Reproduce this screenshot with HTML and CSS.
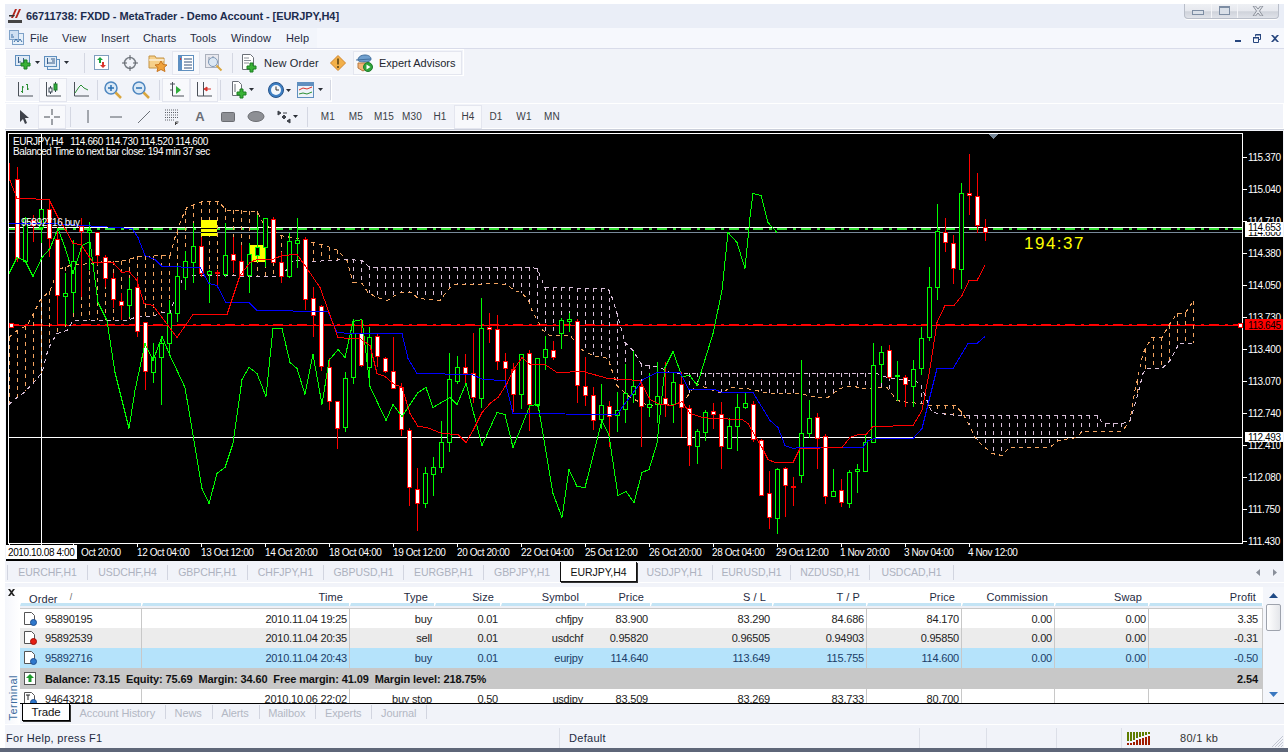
FILE: index.html
```html
<!DOCTYPE html>
<html lang="en">
<head>
<meta charset="utf-8">
<title>MetaTrader</title>
<link rel="stylesheet" href="styles.css">
</head>
<body>
<div class="window">
  <header class="titlebar">
    <svg class="logo" width="14" height="16" viewBox="0 0 14 16"><path d="M3 10 7 1h2L5 10zM7 10l4-9h2L9 10z" fill="#b3261e"/><path d="M1 7h6l-1 1.500H1z" fill="#333"/><rect x="0" y="12" width="14" height="3" fill="#444"/></svg>
    <span class="title-text">66711738: FXDD - MetaTrader - Demo Account - [EURJPY,H4]</span>
    <div class="winbtns">
      <span class="winbtn wb-min"><i></i></span>
      <span class="winbtn wb-max"><i></i></span>
      <span class="winbtn wb-close"><svg width="12" height="10" viewBox="0 0 12 10"><path d="M1 0h2.500L6 3l2.500-3H11L7.500 5 11 10H8.500L6 7l-2.500 3H1l3.500-5z" fill="#dfe2e8" stroke="#8c919b"/></svg></span>
    </div>
  </header>
  <nav class="menubar">
    <svg class="menu-icon" width="15" height="16" viewBox="0 0 15 16"><rect x="3.500" y="3.500" width="11" height="11" fill="#e6f0fa" stroke="#7ea2c8"/><rect x=".5" y=".5" width="9" height="9" fill="#cfe0f2" stroke="#7ea2c8"/><path d="M2 5h2M2 7h3M5 12l2-3 2 3 2-3 2 3" stroke="#3a6ea5" fill="none"/></svg>
    <span class="menu-item m1">File</span>
    <span class="menu-item m2">View</span>
    <span class="menu-item m3">Insert</span>
    <span class="menu-item m4">Charts</span>
    <span class="menu-item m5">Tools</span>
    <span class="menu-item m6">Window</span>
    <span class="menu-item m7">Help</span>
    <div class="mdi-btns">
      <svg class="mdi-min" width="7" height="3" viewBox="0 0 7 3"><rect width="6" height="2" y="1" fill="#27467e"/></svg>
      <svg width="8" height="9" viewBox="0 0 8 9"><path d="M2.500 2.500v-2h5v5h-2M.5 3.500h5v5h-5z" fill="none" stroke="#27467e"/><rect x="3" width="5" height="1.500" fill="#27467e"/><rect y="3" width="6" height="1.500" fill="#27467e"/></svg>
      <svg width="8" height="7" viewBox="0 0 8 7"><path d="M0 0h2l2 2 2-2h2L5 3.500 8 7H6L4 5 2 7H0l3-3.500z" fill="#27467e"/></svg>
    </div>
  </nav>

  <div class="toolbars">
    <div class="bar bar1">
      <span class="tool"><svg class="ico" width="18" height="18" viewBox="0 0 18 18"><rect x=".5" y="1.500" width="14" height="10" fill="#dfeaf6" stroke="#5f8fbf"/><path d="M3.500 3v6M3 8h3M8.500 4v5" stroke="#3a5f8a" fill="none"/><path d="M9 6h3v3h3v3h-3v3H9v-3H6V9h3z" fill="#39b236" stroke="#1d7f23"/><path class="caret" d="M20 7h5l-2.500 3z"/></svg></span>
      <span class="tool"><svg class="ico" width="18" height="18" viewBox="0 0 18 18"><rect x="4.500" y="5.500" width="12" height="10" fill="#e6eff8" stroke="#5f8fbf"/><rect x="1.500" y="2.500" width="12" height="10" fill="#dfeaf6" stroke="#5f8fbf"/><path d="M4.500 4v6M4 9h8M8 5h4M9 7h3" stroke="#3a5f8a" fill="none"/><path class="caret" d="M21 7h5l-2.500 3z"/></svg></span>
      <span class="sep s18"></span>
      <span class="tool"><svg class="ico" width="18" height="18" viewBox="0 0 18 18"><rect x="1.500" y="1.500" width="14" height="14" fill="#fff" stroke="#7f9dbe"/><path d="M7 3l3 3H8v3H6V6H4z" fill="#19a23b"/><path d="M10 14l3-3h-2V8H9v3H7z" fill="#d8342c"/></svg></span>
      <span class="tool"><svg class="ico" width="18" height="18" viewBox="0 0 18 18"><circle cx="9" cy="9" r="5.500" fill="none" stroke="#7b8088" stroke-width="1.500"/><path d="M9 1v5M9 12v5M1 9h5M12 9h5" stroke="#5d6168"/></svg></span>
      <span class="tool"><svg class="ico" width="20" height="18" viewBox="0 0 20 18"><path d="M1 2h6l1 2h8v10H1z" fill="#f6d08a" stroke="#c49345"/><path d="M1 6h15" stroke="#fff"/><path d="M13 7l2 3.500 4 .5-3 2.500 1 4-4-2-4 2 1-4-3-2.500 4-.5z" fill="#f0a33c" stroke="#c9761f"/></svg></span>
      <span class="tool on"><svg class="ico" width="16" height="16" viewBox="0 0 16 16"><rect x=".5" y=".5" width="15" height="15" fill="#fff" stroke="#5f8fbf"/><rect x="1" y="1" width="3" height="14" fill="#5b90c6"/><path d="M6 4h8M6 7h8M6 10h8M6 13h8" stroke="#33507a"/><path d="M2.500 3v2" stroke="#d8342c"/></svg></span>
      <span class="tool"><svg class="ico" width="20" height="20" viewBox="0 0 20 20"><rect x="1.500" y="1.500" width="13" height="13" fill="#e8e8ee" stroke="#aab0bc"/><path d="M5 4v6M9 3v7" stroke="#8a96a8"/><circle cx="9" cy="9" r="4.500" fill="#dbe7f3" stroke="#7f98b6"/><path d="M12.500 12.500l5 5" stroke="#d9a63e" stroke-width="2"/></svg></span>
      <span class="sep s4"></span>
      <span class="order-btn"><svg width="18" height="20" viewBox="0 0 18 20"><path d="M1.500 1.500h8l3 3v12h-11z" fill="#fff" stroke="#6b7078"/><path d="M3 5h5M3 7.500h7M3 10h5" stroke="#8a8f98"/><path d="M9 10h3v3h3v3h-3v3H9v-3H6v-3h3z" fill="#39b236" stroke="#1d7f23"/></svg><span class="tb-label">New Order</span></span>
      <span class="tool warn"><svg class="ico" width="16" height="16" viewBox="0 0 16 16"><path d="M8 .5 15.500 8 8 15.500.5 8z" fill="#f2b04a" stroke="#d4862a"/><rect x="7" y="3.500" width="2" height="6" fill="#7b5a1e"/><rect x="7" y="11" width="2" height="2" fill="#7b5a1e"/></svg></span>
      <span class="ea-btn"><svg width="18" height="20" viewBox="0 0 18 20"><path d="M3 7c0-3 3-5 7-5s6 2 6 4-3 3-7 3-6-1-6-2z" fill="#6f9fce" stroke="#44709e"/><path d="M1 7l15-1" stroke="#44709e"/><path d="M3 10h10v5l-5 3-5-3z" fill="#f3b477" stroke="#b77a42"/><circle cx="13" cy="14" r="4.500" fill="#2ea53a" stroke="#1f7a2a"/><path d="M11.500 11.500l4 2.500-4 2.500z" fill="#fff"/></svg><span class="tb-label">Expert Advisors</span></span>
    </div>
    <div class="bar bar2">
      <span class="tool"><svg class="ico" width="18" height="18" viewBox="0 0 18 18"><path class="axis" d="M2.500 1v14H17"/><path d="M6.500 5v7M5 10.500h1.500M6.500 6H8M11.500 3v6M10 3.500h1.500M11.500 8H13" stroke="#2b8f34" fill="none"/></svg></span>
      <span class="tool on"><svg class="ico" width="18" height="18" viewBox="0 0 18 18"><path class="axis" d="M2.500 1v14H17"/><path d="M6.500 5v8M11.500 1v10" stroke="#35424f"/><rect x="5" y="7" width="3" height="4" fill="#fff" stroke="#35424f"/><rect x="10" y="3" width="3" height="6" fill="#2fae3a" stroke="#1f7a2a"/></svg></span>
      <span class="tool"><svg class="ico" width="18" height="18" viewBox="0 0 18 18"><path class="axis" d="M2.500 1v14H17"/><path d="M3 12 7 6l2-2 3 3 4 2" fill="none" stroke="#2b8f34"/></svg></span>
      <span class="sep sa"></span>
      <span class="tool"><svg class="ico" width="20" height="20" viewBox="0 0 20 20"><circle cx="8" cy="8" r="6" fill="#dbe9f6" stroke="#4d86bf" stroke-width="1.500"/><path d="M5 8h6M8 5v6" stroke="#2a6fb2" stroke-width="1.500"/><path d="M12.500 12.500l5.500 5.500" stroke="#d9a63e" stroke-width="2.500"/></svg></span>
      <span class="tool"><svg class="ico" width="20" height="20" viewBox="0 0 20 20"><circle cx="8" cy="8" r="6" fill="#dbe9f6" stroke="#4d86bf" stroke-width="1.500"/><path d="M5 8h6" stroke="#2a6fb2" stroke-width="1.500"/><path d="M12.500 12.500l5.500 5.500" stroke="#d9a63e" stroke-width="2.500"/></svg></span>
      <span class="sep sb"></span>
      <span class="tool on"><svg class="ico" width="18" height="18" viewBox="0 0 18 18"><path class="axis" d="M5.500 1v14H17M3 3h5M3 9h2"/><path d="M9 5l5 4-5 4z" fill="#2fae3a"/></svg></span>
      <span class="tool on"><svg class="ico" width="18" height="18" viewBox="0 0 18 18"><path class="axis" d="M2.500 1v14H17M8.500 1v14"/><path d="M16 8h-4M12 6l-3 2 3 2z" fill="#d8342c" stroke="#d8342c"/></svg></span>
      <span class="sep sc"></span>
      <span class="tool"><svg class="ico" width="18" height="20" viewBox="0 0 18 20"><path d="M1.500 1.500h6l3 3v11h-9z" fill="#fff" stroke="#6b7078"/><path d="M4 4v8" stroke="#6b7078"/><path d="M9 9h3v3h3v3h-3v3H9v-3H6v-3h3z" fill="#39b236" stroke="#1d7f23"/><path class="caret" d="M18 8h5l-2.500 3z"/></svg></span>
      <span class="tool t-clock"><svg class="ico" width="18" height="18" viewBox="0 0 18 18"><circle cx="9" cy="9" r="7.500" fill="#3f80c4" stroke="#27548a"/><circle cx="9" cy="9" r="5" fill="#f5f8fc"/><path d="M9 5.500V9h3" stroke="#333" fill="none"/><path class="caret" d="M19 8h5l-2.500 3z"/></svg></span>
      <span class="tool t-ind"><svg class="ico" width="18" height="16" viewBox="0 0 18 16"><rect x=".5" y=".5" width="16" height="15" fill="#eef3f9" stroke="#5f8fbf"/><rect x="1" y="1" width="15" height="3" fill="#5f8fbf"/><path d="M2 8l4-2 4 1 5-2" stroke="#d8342c" fill="none"/><path d="M2 12l4-1 4 1 5-2" stroke="#2b8f34" fill="none"/><path class="caret" d="M21 6h5l-2.500 3z"/></svg></span>
      <span class="sep send"></span>
    </div>
    <div class="bar bar3">
      <span class="tool"><svg class="ico" width="12" height="18" viewBox="0 0 12 18"><path d="M2 2v12l3-3 2 5 2-1-2-5h4z" fill="#3e424a"/></svg></span>
      <span class="tool on"><svg class="ico" width="18" height="18" viewBox="0 0 18 18"><path d="M9 1v6M9 11v6M1 9h6M11 9h6" stroke="#454a52"/></svg></span>
      <span class="sep sd"></span>
      <span class="tool"><svg class="ico" width="4" height="16" viewBox="0 0 4 16"><path d="M2 1v13" stroke="#555a63"/></svg></span>
      <span class="tool"><svg class="ico" width="16" height="4" viewBox="0 0 16 4"><path d="M2 2h12" stroke="#555a63"/></svg></span>
      <span class="tool"><svg class="ico" width="16" height="16" viewBox="0 0 16 16"><path d="M2 14 14 2" stroke="#6b7078"/></svg></span>
      <span class="tool"><svg class="ico" width="16" height="16" viewBox="0 0 16 16"><path d="M1 1h13M1 3.500h13M1 6h13M1 8.500h13M1 11h9" stroke="#5c6068" stroke-dasharray="1 1" fill="none"/><path d="M11.500 16v-3h3M11.500 14.500h2" stroke="#444" fill="none"/></svg></span>
      <span class="tool glyph">A</span>
      <span class="tool"><svg class="ico" width="14" height="10" viewBox="0 0 14 10"><rect x=".5" y=".5" width="13" height="9" rx="1" fill="#8d8f94" stroke="#6b6d72"/></svg></span>
      <span class="tool"><svg class="ico" width="18" height="11" viewBox="0 0 18 11"><ellipse cx="9" cy="5.500" rx="8" ry="5" fill="#8d8f94" stroke="#6b6d72"/></svg></span>
      <span class="tool"><svg class="ico" width="16" height="14" viewBox="0 0 16 14"><path d="M2 1l3 2-3 2zM7 3h4M14 9l-3 2 3 2zM6 7l2-2 2 2-2 2z" fill="#3e424a" stroke="#3e424a"/><path class="caret" d="M17 5h5l-2.500 3z"/></svg></span>
      <span class="sep s3"></span>
      <span class="tool tf">M1</span><span class="tool tf">M5</span><span class="tool tf">M15</span><span class="tool tf">M30</span><span class="tool tf">H1</span><span class="tool tf on">H4</span><span class="tool tf">D1</span><span class="tool tf">W1</span><span class="tool tf">MN</span>
    </div>
  </div>

  <div class="chart-wrap">
    <svg id="chart" class="chart" width="1277" height="430" viewBox="6 131 1277 430">
      <g id="hlines">
        <path class="hl-red" d="M9 325.500H1242"/>
        <path class="hl-red-dash" d="M9 325H1242"/>
        <path class="hl-green" d="M9 229H1242"/>
        <path class="hl-white" d="M9 227.500H1242"/>
        <path class="hl-gray" d="M9 232.500H1242"/>
        <path class="hl-white" d="M9 437.500H1242"/>
        <path class="hl-white" d="M41.500 134V543"/>
      </g>
      <g id="cloud"></g>
      <rect class="yellow" x="201" y="220" width="16" height="16"/>
      <rect class="yellow" x="250" y="245" width="16" height="17"/>
      <g id="candles"></g>
      <g id="indicators"></g>
      <path class="stripe" d="M201 228.500H217M201 232.500H217"/>
      <rect class="frame" x="8.500" y="133.500" width="1234" height="410"/>
      <path class="ticks" d="M1243 157.500h4M1243 189.500h4M1243 221.500h4M1243 253.500h4M1243 285.500h4M1243 317.500h4M1243 349.500h4M1243 381.500h4M1243 413.500h4M1243 445.500h4M1243 477.500h4M1243 509.500h4M1243 541.500h4M9.500 544v3M41.500 544v3M73.500 544v3M137.500 544v3M201.500 544v3M265.500 544v3M329.500 544v3M393.500 544v3M457.500 544v3M521.500 544v3M585.500 544v3M649.500 544v3M713.500 544v3M777.500 544v3M841.500 544v3M905.500 544v3M969.500 544v3"/>
      <path class="triangle" d="M989 134h9l-4.500 5z"/>
      <rect class="mark" x="9.500" y="323.500" width="4" height="4"/>
      <rect class="mark" x="1238.500" y="323.500" width="4" height="4"/>

      <text class="t" x="13" y="145">EURJPY,H4   114.660 114.730 114.520 114.600</text>
      <text class="t" x="13" y="155">Balanced Time to next bar close: 194 min 37 sec</text>
      <text class="t" x="21" y="226">95892716 buy</text>
      <text class="timer" x="1024" y="249">194:37</text>

      <text class="t" x="1248" y="161">115.370</text>
      <text class="t" x="1248" y="193">115.040</text>
      <text class="t" x="1248" y="225">114.710</text>
      <text class="t" x="1248" y="257">114.380</text>
      <text class="t" x="1248" y="289">114.050</text>
      <text class="t" x="1248" y="321">113.730</text>
      <text class="t" x="1248" y="353">113.400</text>
      <text class="t" x="1248" y="385">113.070</text>
      <text class="t" x="1248" y="417">112.740</text>
      <text class="t" x="1248" y="449">112.410</text>
      <text class="t" x="1248" y="481">112.080</text>
      <text class="t" x="1248" y="513">111.750</text>
      <text class="t" x="1248" y="545">111.430</text>

      <rect class="tag-white" x="1245" y="227" width="38" height="10"/>
      <text class="t dark" x="1248" y="236">114.600</text>
      <rect class="tag-white" x="1245" y="222" width="38" height="10"/>
      <text class="t dark" x="1248" y="231">114.653</text>
      <rect class="tag-red" x="1245" y="319" width="38" height="11"/>
      <text class="t dark" x="1248" y="329">113.645</text>
      <rect class="tag-white" x="1245" y="432" width="38" height="10"/>
      <text class="t dark" x="1248" y="441">112.493</text>

      <rect class="tag-white" x="6" y="545" width="71" height="14"/>
      <text class="t dark" x="8" y="556">2010.10.08 4:00</text>
      <text class="t" x="81" y="556">Oct 20:00</text>
      <text class="t" x="137" y="556">12 Oct 04:00</text>
      <text class="t" x="201" y="556">13 Oct 12:00</text>
      <text class="t" x="265" y="556">14 Oct 20:00</text>
      <text class="t" x="329" y="556">18 Oct 04:00</text>
      <text class="t" x="393" y="556">19 Oct 12:00</text>
      <text class="t" x="457" y="556">20 Oct 20:00</text>
      <text class="t" x="521" y="556">22 Oct 04:00</text>
      <text class="t" x="585" y="556">25 Oct 12:00</text>
      <text class="t" x="649" y="556">26 Oct 20:00</text>
      <text class="t" x="712" y="556">28 Oct 04:00</text>
      <text class="t" x="776" y="556">29 Oct 12:00</text>
      <text class="t" x="840" y="556">1 Nov 20:00</text>
      <text class="t" x="904" y="556">3 Nov 04:00</text>
      <text class="t" x="968" y="556">4 Nov 12:00</text>
    </svg>
  </div>

  <div class="symtabs">
    <span class="symtab">EURCHF,H1</span>
    <span class="symtab">USDCHF,H4</span>
    <span class="symtab">GBPCHF,H1</span>
    <span class="symtab">CHFJPY,H1</span>
    <span class="symtab">GBPUSD,H1</span>
    <span class="symtab">EURGBP,H1</span>
    <span class="symtab">GBPJPY,H1</span>
    <span class="symtab active">EURJPY,H4</span>
    <span class="symtab">USDJPY,H1</span>
    <span class="symtab">EURUSD,H1</span>
    <span class="symtab">NZDUSD,H1</span>
    <span class="symtab">USDCAD,H1</span>
    <span class="tab-arrows">
      <svg width="4" height="7" viewBox="0 0 4 7"><path d="M4 0v7L0 3.500z" fill="#8a8f9a"/></svg>
      <svg width="4" height="7" viewBox="0 0 4 7"><path d="M0 0v7l4-3.500z" fill="#8a8f9a"/></svg>
    </span>
  </div>

  <section class="terminal">
    <aside class="side">
      <svg class="side-x" width="7" height="7" viewBox="0 0 7 7"><path d="M0 0h2l1.500 2L5 0h2L4.500 3.500 7 7H5L3.500 5 2 7H0l2.500-3.500z" fill="#222"/></svg>
      <span class="side-label">Terminal</span>
    </aside>
    <div class="term-main">
      <div class="term-top">
        <div class="table">
          <div class="cols head">
            <span class="cell left">Order<em>/</em></span>
            <span class="cell">Time</span><span class="cell">Type</span><span class="cell">Size</span><span class="cell">Symbol</span><span class="cell">Price</span><span class="cell">S / L</span><span class="cell">T / P</span><span class="cell">Price</span><span class="cell">Commission</span><span class="cell">Swap</span><span class="cell">Profit</span>
          </div>
          <div class="headgap"></div>
          <div class="cols row r1">
            <span class="cell first"><svg class="doc" width="13" height="14" viewBox="0 0 13 14"><path d="M.5.5h7l3 3v9H.5z" fill="#fff" stroke="#555"/><circle cx="9.500" cy="10.500" r="3" fill="#2f78cc" stroke="#1f4f90"/></svg>95890195</span>
            <span class="cell">2010.11.04 19:25</span><span class="cell">buy</span><span class="cell">0.01</span><span class="cell">chfjpy</span><span class="cell">83.900</span><span class="cell">83.290</span><span class="cell">84.686</span><span class="cell">84.170</span><span class="cell">0.00</span><span class="cell">0.00</span><span class="cell">3.35</span>
          </div>
          <div class="cols row alt">
            <span class="cell first"><svg class="doc" width="13" height="14" viewBox="0 0 13 14"><path d="M.5.5h7l3 3v9H.5z" fill="#fff" stroke="#555"/><circle cx="9.500" cy="10.500" r="3" fill="#e51e12" stroke="#a01208"/></svg>95892539</span>
            <span class="cell">2010.11.04 20:35</span><span class="cell">sell</span><span class="cell">0.01</span><span class="cell">usdchf</span><span class="cell">0.95820</span><span class="cell">0.96505</span><span class="cell">0.94903</span><span class="cell">0.95850</span><span class="cell">0.00</span><span class="cell">0.00</span><span class="cell">-0.31</span>
          </div>
          <div class="cols row sel">
            <span class="cell first"><svg class="doc" width="13" height="14" viewBox="0 0 13 14"><path d="M.5.5h7l3 3v9H.5z" fill="#fff" stroke="#555"/><circle cx="9.500" cy="10.500" r="3" fill="#2f78cc" stroke="#1f4f90"/></svg>95892716</span>
            <span class="cell">2010.11.04 20:43</span><span class="cell">buy</span><span class="cell">0.01</span><span class="cell">eurjpy</span><span class="cell">114.640</span><span class="cell">113.649</span><span class="cell">115.755</span><span class="cell">114.600</span><span class="cell">0.00</span><span class="cell">0.00</span><span class="cell">-0.50</span>
          </div>
          <div class="balance">
            <svg class="doc" width="13" height="14" viewBox="0 0 13 14"><rect x=".5" y=".5" width="11" height="12" fill="#fff" stroke="#555"/><path d="M6 2l4 4H7.500v4h-3V6H2z" fill="#1d9a2c"/></svg>
            <b>Balance: 73.15&nbsp; Equity: 75.69&nbsp; Margin: 34.60&nbsp; Free margin: 41.09&nbsp; Margin level: 218.75%</b>
            <b class="total">2.54</b>
          </div>
          <div class="cols row">
            <span class="cell first"><svg class="doc" width="13" height="14" viewBox="0 0 13 14"><path d="M.5.5h7l3 3v9H.5z" fill="#fff" stroke="#555"/><path d="M2 3h4M4 3v5" stroke="#222"/><circle cx="9.500" cy="10.500" r="3" fill="#2f78cc" stroke="#1f4f90"/></svg>94643218</span>
            <span class="cell">2010.10.06 22:02</span><span class="cell">buy stop</span><span class="cell">0.50</span><span class="cell">usdjpy</span><span class="cell">83.509</span><span class="cell">83.269</span><span class="cell">83.733</span><span class="cell">80.700</span><span class="cell"></span><span class="cell"></span><span class="cell"></span>
          </div>
        </div>
        <div class="scroll">
          <svg width="9" height="5" viewBox="0 0 9 5"><path d="M4.500 0 9 5H0z" fill="#1f4a86"/></svg>
          <span class="thumb"></span>
          <svg class="sc-down" width="9" height="5" viewBox="0 0 9 5"><path d="M0 0h9L4.500 5z" fill="#3a78c0"/></svg>
        </div>
      </div>
      <div class="termtabs">
        <span class="termtab active">Trade</span>
        <span class="termtab">Account History</span>
        <span class="termtab">News</span>
        <span class="termtab">Alerts</span>
        <span class="termtab">Mailbox</span>
        <span class="termtab">Experts</span>
        <span class="termtab">Journal</span>
      </div>
    </div>
  </section>

  <footer class="statusbar">
    <span class="st st-help">For Help, press F1</span>
    <span class="st st-def">Default</span>
    <span class="st st-a"></span>
    <span class="st st-b"></span>
    <span class="st st-c"></span>
    <span class="st st-meter">
      <svg width="24" height="13" viewBox="0 0 24 13"><path d="M1 0v9M4 0v9M7 0v8M10 0v6M13 0v5M16 0v4M19 0v3M22 0v2" stroke="#5e7c00" stroke-width="2"/><path d="M1 11v2M4 11v2M7 10v3M10 8v5M13 7v6M16 6v7M19 5v8M22 4v9" stroke="#a21c00" stroke-width="2"/></svg>
    </span>
    <span class="st-kb">80/1 kb</span>
    <svg class="grip" width="14" height="14" viewBox="0 0 14 14"><path d="M13 2 2 13M13 5 5 13M13 8l-5 5M13 11l-2 2" stroke="#c3c7d2"/></svg>
  </footer>
</div>
<script src="chart.js"></script>
</body>
</html>
```
FILE: styles.css
```css
html, body { margin: 0; padding: 0; background: #fff; }
body { width: 1288px; height: 752px; overflow: hidden; font-family: "Liberation Sans", Arial, sans-serif; font-size: 11px; color: #1f2b42; }
.window { margin: 4px 4px 0 5px; height: 748px; display: flex; flex-direction: column; background: #f1f3f9; position: relative; }

.titlebar { height: 24px; flex: none; display: flex; align-items: center; padding-left: 3px; background: #eaeef7; }
.logo { margin-right: 4px; }
.title-text { font-weight: bold; font-size: 11px; letter-spacing: -.08px; color: #1c2c4e; }
.winbtns { margin-left: auto; margin-right: 5px; margin-top: -10px; height: 14px; display: flex; border: 1px solid #b9bec9; border-top: 0; border-radius: 0 0 4px 4px; background: linear-gradient(#eef0f4 0, #e6e8ee 50%, #cfd3db 55%, #dfe2e9 100%); box-shadow: 0 1px 0 #fff; }
.winbtn { display: flex; align-items: center; justify-content: center; border-right: 1px solid #f4f5f8; height: 14px; }
.wb-min { width: 26px; }
.wb-max { width: 25px; }
.wb-close { width: 40px; border-right: 0; }
.winbtn i { display: block; border: 1px solid #7d8da3; background: #d9dfe8; }
.wb-min i { width: 10px; height: 3px; margin-top: 3px; }
.wb-max i { width: 9px; height: 6px; border-top-width: 2px; }

.menubar { height: 20px; flex: none; display: flex; align-items: center; padding-left: 4px; background: linear-gradient(90deg, #f2f5fb 0, #f2f5fb 312px, #f6f8fd 312px); border-bottom: 1px solid #d9dcea; }
.menu-icon { margin-right: 6px; }
.menu-item { font-size: 11px; letter-spacing: .15px; color: #1f2b42; }
.m1 { width: 32px; }
.m2 { width: 39px; }
.m3 { width: 42px; }
.m4 { width: 47px; }
.m5 { width: 41px; }
.m6 { width: 55px; }
.mdi-btns { margin-left: auto; margin-right: 5px; display: flex; gap: 10px; align-items: center; }
.mdi-min { margin-top: 4px; margin-right: 1px; }

.toolbars { flex: none; height: 81px; display: flex; flex-direction: column; gap: 1px; box-sizing: border-box; border-bottom: 1px solid #cbcfdb; }
.bar { display: flex; align-items: center; box-sizing: border-box; border: 1px solid #fff; background: #f1f3f9; }
.bar1 { height: 27px; width: 459px; padding-left: 4px; }
.bar2 { height: 25px; width: 327px; padding-left: 5px; }
.bar3 { height: 26px; width: 1279px; padding: 1px 0 0 4px; }
.tool { width: 28px; height: 24px; flex: none; display: flex; align-items: center; justify-content: center; box-sizing: border-box; }
.tool.on { background: #f8f9fc; outline: 1px solid #e4e6ef; outline-offset: -1px; }
.ico { overflow: visible; }
.caret { fill: #2a2e36; }
.axis { fill: none; stroke: #4b5159; }
.sep { flex: none; width: 1px; height: 20px; background: #d4d7e2; }
.s18 { margin: 0 3px 0 18px; }
.s4 { margin: 0 4px; }
.sa { margin: 0 1px 0 2px; }
.sb { margin: 0 2px 0 4px; }
.sc { margin: 0 5px 0 2px; }
.sd { margin: 0 3px 0 4px; }
.s3 { margin: 0 6px 0 9px; }
.send { margin-left: 10px; }
.bar2 .t-clock { margin-left: 8px; }
.bar2 .t-ind { margin-left: 2px; }
.order-btn { flex: none; display: flex; align-items: center; gap: 5px; width: 90px; padding-left: 4px; box-sizing: border-box; }
.tb-label { letter-spacing: .2px; color: #22262e; white-space: nowrap; }
.warn { width: 24px; margin-right: 3px; margin-left: -1px; }
.ea-btn { flex: none; display: flex; align-items: center; gap: 6px; height: 22px; width: 107px; margin-left: 1px; box-sizing: border-box; padding-left: 1px; background: #f8f9fc; outline: 1px solid #e4e6ef; }
.ea-btn .tb-label { letter-spacing: 0; }
.glyph { font-size: 13px; font-weight: bold; color: #6a6e76; }
.tf { font-size: 10px; letter-spacing: .2px; color: #3a3e46; }

.chart-wrap { flex: none; height: 430px; margin: 1px 0 0 1px; background: #000; width: 1277px; }
.chart { display: block; background: #000; shape-rendering: crispEdges; }
.chart text { font-family: "Liberation Sans", Arial, sans-serif; font-size: 10px; letter-spacing: -.4px; white-space: pre; }
.t { fill: #fff; }
.t.dark { fill: #000; }
.chart .timer { fill: #ffff00; font-size: 17px; letter-spacing: 1.5px; }
.hl-white { stroke: #fff; fill: none; }
.hl-gray { stroke: #778899; fill: none; }
.hl-green { stroke: #32e032; stroke-width: 2; stroke-dasharray: 10 6 3 5; fill: none; }
.hl-red { stroke: #ff0000; fill: none; }
.hl-red-dash { stroke: #ff0000; stroke-width: 2; stroke-dasharray: 10 6 3 5; fill: none; }
.yellow { fill: #ffff00; }
.stripe { stroke: #000; fill: none; }
.frame { fill: none; stroke: #fff; }
.ticks { stroke: #fff; fill: none; }
.triangle { fill: #778899; }
.mark { fill: #fff; stroke: #f00; }
.tag-white { fill: #fff; }
.tag-red { fill: #f00; }
.wick-g { stroke: #00ff00; fill: none; }
.wick-r { stroke: #ff0000; fill: none; }
.body-g { stroke: #00ff00; fill: #000; }
.body-r { stroke: #ff0000; fill: #fff; }
.line-red { stroke: #ff0000; fill: none; }
.line-blue { stroke: #0000ff; fill: none; }
.line-green { stroke: #00ff00; fill: none; }
.kumo-a, .hatch-a { stroke: #f4a460; fill: none; stroke-dasharray: 4 4; }
.kumo-b, .hatch-b { stroke: #d8bfd8; fill: none; stroke-dasharray: 4 4; }

.symtabs { flex: none; height: 21px; margin-top: 1px; display: flex; align-items: center; padding-left: 2px; background: #f1f3f9; border-bottom: 1px solid #fff; box-sizing: border-box; }
.symtab { flex: none; width: 80px; box-sizing: border-box; text-align: center; color: #adb2bf; letter-spacing: -.05px; font-size: 10.500px; line-height: 15px; border-right: 1px solid #d2d5e0; }
.symtab:first-child { border-left: 1px solid #d2d5e0; width: 81px; }
.symtab.active { width: 77px; height: 20px; line-height: 20px; background: #fff; color: #111; border: 1px solid #111; border-top: 0; box-shadow: 1px 1px 0 #333; position: relative; margin-left: -1px; }
.symtab:nth-child(9) { width: 76px; }
.symtab:nth-child(10) { width: 78px; }
.symtab:nth-child(11) { width: 79px; }
.symtab:nth-child(12) { width: 84px; }
.symtab:nth-child(4) { width: 76px; }
.symtab:nth-child(7) { width: 77px; }
.tab-arrows { margin-left: auto; margin-right: 7px; display: flex; gap: 13px; }

.terminal { flex: none; height: 141px; display: flex; padding-top: 4px; box-sizing: border-box; }
.side { flex: none; width: 15px; display: flex; flex-direction: column; align-items: center; background: linear-gradient(90deg, #f4f6fb, #fff); justify-content: space-between; }
.side-x { margin-top: 2px; margin-right: 2px; }
.side-label { writing-mode: vertical-rl; transform: rotate(180deg); color: #3b6c9e; letter-spacing: .5px; margin-bottom: 3px; }
.term-main { flex: 1; min-width: 0; display: flex; flex-direction: column; }
.term-top { flex: none; height: 116px; display: flex; border-bottom: 1px solid #000; overflow: hidden; }
.table { width: 1243px; flex: none; background: #fff; overflow: hidden; }
.cols { display: grid; grid-template-columns: 122px 208px 85px 66px 85px 65px 122px 94px 95px 93px 94px 114px; }
.head { height: 19px; background: #fff; }
.head .cell { border-bottom: 3px solid #c3e4f5; border-left: 1px solid #fff; margin-right: 1px; padding-right: 6px; height: 16px; line-height: 20px; letter-spacing: .1px; }
.head .left { text-align: left; padding-left: 8px; }
.head em { font-style: normal; font-size: 9px; margin-left: 12px; color: #666; vertical-align: 3px; }
.headgap { height: 3px; background: #eef0f6; border-bottom: 1px solid #c8c8c8; box-sizing: border-box; }
.cell { text-align: right; white-space: nowrap; overflow: hidden; }
.row { height: 20px; background: #fff; }
.row.r1 { height: 19px; }
.row .cell { line-height: 20px; padding-right: 2px; border-right: 1px solid transparent; letter-spacing: -.2px; color: #222; }
.row .cell:last-child { padding-right: 4px; }
.row .first, .row .cell:nth-child(2), .row .cell:nth-child(n+8) { border-right-color: #c8c8c8; }
.row.alt { background: #ececec; }
.row.sel { background: #b5e3fb; }
.row.sel .cell { color: #1a3d68; }
.row .cell.first { display: flex; align-items: center; text-align: left; padding-left: 4px; box-sizing: border-box; }
.doc { flex: none; margin-right: 8px; }
.balance { height: 21px; display: flex; align-items: center; background: #c8c8c8; padding: 0 5px 0 4px; color: #111; }
.balance b { letter-spacing: -.1px; }
.balance .total { margin-left: auto; }
.scroll { flex: 1; display: flex; flex-direction: column; align-items: center; padding-top: 6px; background: #f4f6fb; }
.thumb { display: block; width: 13px; height: 25px; margin-top: 6px; border: 1px solid #9ea3ad; border-radius: 2px; background: linear-gradient(90deg, #fff, #e4e6ea); }
.sc-down { margin-top: auto; margin-bottom: 6px; }

.termtabs { flex: none; display: flex; align-items: flex-start; padding-left: 2px; height: 19px; }
.termtab { color: #b3b8c4; padding: 0 10px 0 8.500px; height: 14px; line-height: 16px; margin-top: 1px; border-right: 1px solid #d2d5e0; letter-spacing: -.1px; }
.termtab.active { height: 17px; line-height: 17px; margin-top: 0; width: 48px; padding: 0; text-align: center; background: #fff; color: #111; border: 1px solid #000; border-top: 0; box-shadow: 1px 1px 0 #333; box-sizing: border-box; font-size: 11.500px; margin-right: 1px; }

.statusbar { flex: none; height: 24px; display: flex; align-items: center; padding-top: 3px; border-top: 1px solid #fff; box-sizing: border-box; background: #f1f3f9; }
.st { height: 20px; line-height: 20px; border-right: 1px solid #dcdfe8; box-sizing: border-box; letter-spacing: .3px; flex: none; }
.st-help { width: 555px; padding-left: 1px; }
.st-def { width: 360px; padding-left: 9px; }
.st-a { width: 67px; }
.st-b { width: 70px; }
.st-c { width: 65px; }
.st-meter { width: 58px; border-right: 0; padding-left: 5px; display: flex; align-items: center; }
.st-kb { letter-spacing: .3px; color: #333; }
.grip { margin-left: auto; align-self: flex-end; }
body::after { content: ""; position: absolute; left: 0; top: 748px; width: 1288px; height: 4px; background: #5e6678; }
```
FILE: chart.js
```js
(function () {
  var NS = 'http://www.w3.org/2000/svg';
  function el(parent, name, cls, attrs) {
    var n = document.createElementNS(NS, name);
    n.setAttribute('class', cls);
    for (var k in attrs) n.setAttribute(k, attrs[k]);
    parent.appendChild(n);
    return n;
  }
  // [colour, high, bodyTop, bodyBottom, low] in chart pixels; bars stand 8px apart from x = 17
  var C = [
    'r',167,179,258,262, 'g',217,218,261,263, 'r',215,220,225,242, 'g',209,209,227,243,
    'r',201,209,238,257, 'r',227,239,295,325, 'g',273,293,296,325, 'g',240,261,292,313,
    'r',218,226,231,297, 'g',222,230,232,270, 'r',232,232,255,265, 'r',255,257,278,287,
    'r',273,278,299,308, 'r',293,301,305,320, 'g',278,289,305,317, 'r',277,287,331,337,
    'r',322,322,371,390, 'g',343,357,372,383, 'g',337,343,357,405, 'g',300,313,343,353,
    'g',265,276,313,322, 'g',251,261,277,290, 'g',223,246,262,283, 'r',237,246,273,277,
    'g',270,271,274,303, 'r',270,272,273,285, 'g',223,255,274,277, 'r',237,254,260,273,
    'r',245,261,275,275, 'g',243,254,275,293, 'g',215,247,255,262, 'g',218,218,247,267,
    'r',217,219,262,263, 'r',252,262,276,283, 'g',233,241,276,278, 'g',218,240,243,268,
    'r',237,239,299,310, 'r',287,298,315,337, 'r',305,306,366,371, 'r',358,367,401,410,
    'r',401,401,428,449, 'g',372,378,427,432, 'g',319,333,377,384, 'r',319,333,365,367,
    'g',327,337,367,382, 'r',333,336,356,367, 'r',357,358,371,373, 'r',337,371,388,388,
    'r',383,387,429,436, 'r',428,430,487,506, 'r',468,489,503,531, 'g',467,473,503,508,
    'g',457,467,474,496, 'g',421,442,467,473, 'g',353,379,442,452, 'g',356,367,381,384,
    'r',354,367,373,383, 'r',333,373,397,403, 'g',298,328,398,408, 'r',313,327,329,343,
    'r',315,329,361,370, 'r',353,361,368,380, 'r',363,369,394,412, 'g',354,354,394,409,
    'r',350,353,404,431, 'g',358,358,405,407, 'g',336,349,357,370, 'r',341,350,357,360,
    'g',318,320,333,349, 'g',313,319,321,332, 'r',319,321,385,403, 'r',357,386,395,406,
    'r',387,395,420,430, 'g',384,405,419,429, 'r',401,406,416,447, 'g',392,410,415,432,
    'g',364,393,409,423, 'g',351,386,394,403, 'r',384,386,406,447, 'g',373,404,407,417,
    'g',362,396,404,423, 'r',362,398,404,417, 'g',372,382,404,423, 'r',372,384,407,437,
    'r',405,408,445,466, 'g',429,431,446,464, 'g',410,412,432,441, 'r',403,411,414,429,
    'r',402,414,446,469, 'g',418,426,448,449, 'g',394,407,426,451, 'g',392,403,407,409,
    'r',401,404,439,442, 'r',439,440,495,496, 'r',471,493,517,529, 'g',468,469,518,534,
    'r',467,468,485,517, 'r',477,486,487,506, 'g',360,433,475,483, 'g',400,418,433,438,
    'r',413,417,438,469, 'r',434,436,496,504, 'g',469,491,496,497, 'r',479,490,502,507,
    'g',470,472,503,508, 'g',464,469,471,493, 'g',435,442,471,472, 'g',343,365,442,443,
    'g',346,352,364,383, 'r',345,350,377,379, 'g',361,375,376,401, 'r',375,377,384,407,
    'g',360,369,386,407, 'g',327,338,368,375, 'g',267,287,337,341, 'g',204,231,287,300,
    'r',218,232,242,252, 'r',235,243,268,284, 'g',183,193,269,289, 'r',154,193,195,215,
    'r',173,196,225,233, 'r',219,227,232,241
  ];
  var RED = [9,162,10,180,17,198,22,198,49,199,58,217,65,228,73,243,81,244,93,262,113,262,122,272,129,271,137,280,144,303,153,305,177,337,193,314,227,314,240,275,250,262,257,259,273,259,282,255,297,254,305,265,320,287,333,323,338,337,350,338,360,338,370,345,377,373,385,376,393,383,402,387,410,413,418,426,427,427,442,433,458,434,466,442,473,430,482,412,490,403,498,397,507,383,513,370,522,357,530,364,545,364,557,372,583,371,608,378,640,380,650,399,660,404,673,405,682,401,690,413,703,417,713,418,742,419,748,423,755,435,762,447,768,459,775,462,793,462,800,448,842,447,850,437,858,434,866,434,873,426,913,425,922,410,930,368,937,322,945,305,954,305,962,295,969,280,977,280,985,265];
  var BLUE = [9,223,50,223,132,228,138,237,145,255,155,259,162,266,200,267,209,283,217,285,226,302,249,302,257,310,328,311,337,332,350,333,402,333,408,358,417,373,472,374,483,379,505,380,513,413,617,414,625,403,643,379,657,372,680,372,689,389,715,389,722,392,753,392,770,420,778,427,785,445,793,448,800,447,863,447,868,440,875,438,913,438,922,428,937,368,953,368,968,343,977,343,985,336];
  var GREEN = [9,273,17,257,25,260,33,276,42,257,50,248,58,228,65,247,73,273,82,245,90,241,98,302,107,320,115,372,129,428,135,390,145,343,153,360,162,336,170,355,185,387,202,488,209,503,217,473,225,467,233,443,242,379,249,367,257,373,266,396,273,328,282,328,290,362,297,368,305,394,313,354,322,404,329,360,338,349,345,357,353,321,362,319,370,386,386,420,393,404,402,416,418,392,426,387,433,407,450,397,457,404,466,383,482,445,497,412,505,414,513,447,530,405,538,404,553,493,562,517,569,469,577,486,585,487,602,420,609,435,618,495,626,491,634,502,642,472,649,469,657,443,665,367,673,351,682,376,690,375,697,385,713,333,722,290,728,232,737,242,745,268,750,217,753,193,761,195,768,222,777,232];
  var A = [9,337,17,330,27,325,35,310,40,300,50,290,55,277,58,269,70,265,90,263,105,261,120,261,132,258,138,256,170,255,175,237,182,217,187,207,202,201,218,201,227,210,257,211,263,222,280,235,297,238,325,245,338,250,347,260,353,282,362,283,368,292,377,297,387,300,400,292,412,292,418,298,440,300,450,287,455,284,480,284,490,283,507,284,513,289,522,293,528,299,532,310,543,330,550,335,570,335,583,350,593,355,608,358,617,385,630,397,643,403,650,405,682,403,697,383,705,387,722,393,730,387,747,388,770,393,800,393,817,397,828,397,840,388,853,385,860,388,887,387,897,400,907,402,922,403,930,405,955,405,963,413,977,440,992,453,1002,455,1009,447,1050,447,1058,440,1077,437,1082,431,1122,431,1130,420,1135,390,1143,353,1146,347,1152,337,1162,337,1170,323,1177,313,1185,313,1193,301];
  var B = [9,404,17,397,23,393,33,383,42,372,47,353,50,345,57,333,67,330,73,320,128,320,137,316,153,316,162,312,170,312,177,293,183,277,193,275,282,276,293,260,313,261,347,259,362,260,370,267,530,267,537,268,545,287,608,288,612,297,617,313,625,342,633,350,642,365,658,366,670,372,683,373,877,373,887,377,920,382,927,400,932,412,957,415,1097,415,1103,423,1123,423,1130,420,1137,397,1143,373,1146,368,1162,368,1170,360,1177,347,1178,343,1193,343];

  function pts(a) { var s = []; for (var i = 0; i < a.length; i += 2) s.push(a[i] + ',' + (a[i + 1] + 0.5)); return s.join(' '); }
  function at(a, x) {
    for (var i = 0; i < a.length - 2; i += 2) {
      if (x >= a[i] && x <= a[i + 2]) return a[i + 1] + (a[i + 3] - a[i + 1]) * (x - a[i]) / (a[i + 2] - a[i]);
    }
    return null;
  }

  var cloud = document.getElementById('cloud');
  for (var x = 9; x <= 1193; x += 8) {
    var ya = at(A, x), yb = at(B, x);
    if (ya === null || yb === null || Math.abs(ya - yb) < 3) continue;
    el(cloud, 'path', ya < yb ? 'hatch-a' : 'hatch-b', { d: 'M' + (x + 0.5) + ' ' + Math.round(Math.min(ya, yb)) + 'V' + Math.round(Math.max(ya, yb)) });
  }
  el(cloud, 'polyline', 'kumo-a', { points: pts(A) });
  el(cloud, 'polyline', 'kumo-b', { points: pts(B) });

  var candles = document.getElementById('candles');
  for (var i = 0; i * 5 < C.length; i++) {
    var p = i * 5, cx = 17 + 8 * i, col = C[p];
    el(candles, 'path', 'wick-' + col, { d: 'M' + (cx + 0.5) + ' ' + C[p + 1] + 'V' + C[p + 4] });
    el(candles, 'rect', 'body-' + col, { x: cx - 1.5, y: C[p + 2] + 0.5, width: 4, height: Math.max(C[p + 3] - C[p + 2], 1) });
  }

  var ind = document.getElementById('indicators');
  el(ind, 'polyline', 'line-green', { points: pts(GREEN) });
  el(ind, 'polyline', 'line-blue', { points: pts(BLUE) });
  el(ind, 'polyline', 'line-red', { points: pts(RED) });
})();
```
